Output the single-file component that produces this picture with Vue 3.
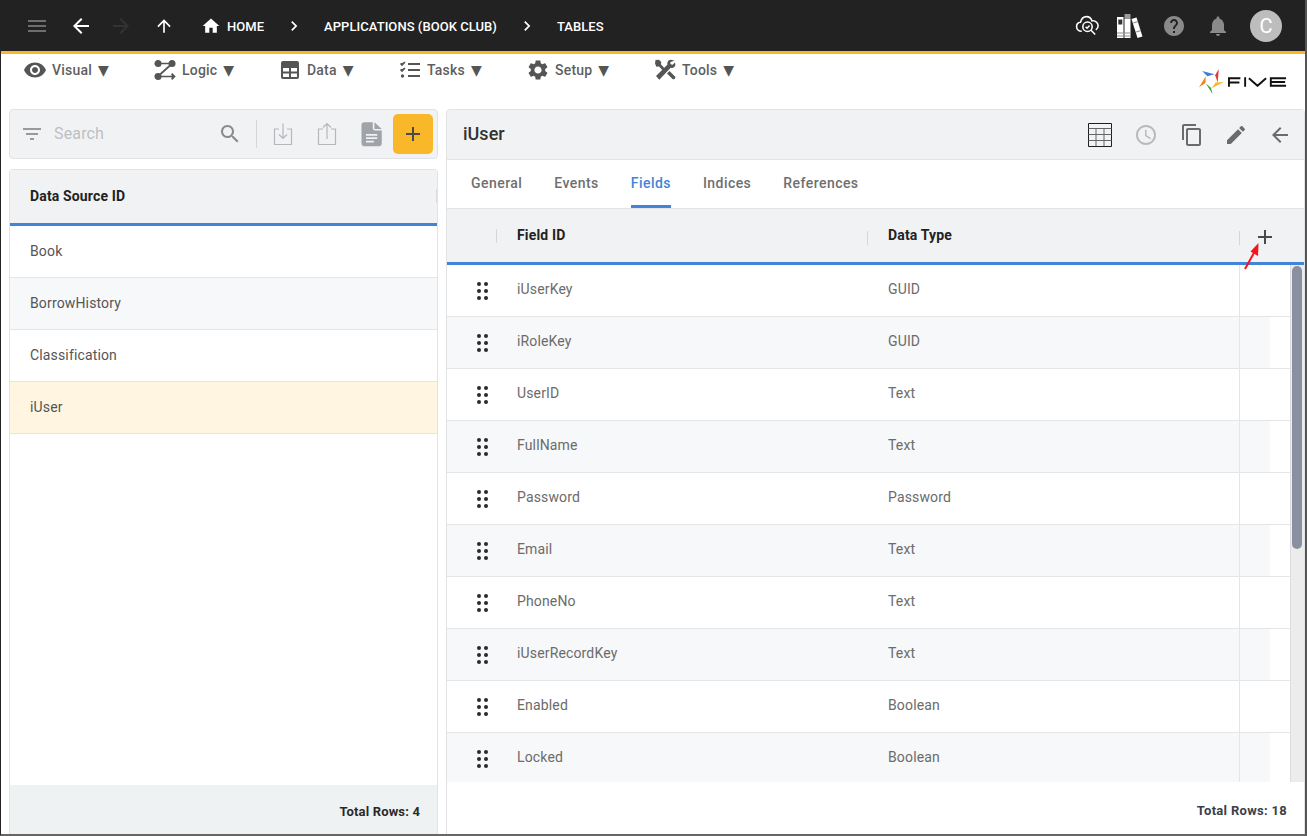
<template>
  <div class="app">
    <header class="topbar">
      <svg class="ic menu-ic" viewBox="0 0 24 24"><path :d="icons.menu" /></svg>
      <svg class="ic back-ic" viewBox="0 0 24 24"><path :d="icons.back" /></svg>
      <svg class="ic fwd-ic" viewBox="0 0 24 24"><path :d="icons.forward" /></svg>
      <svg class="ic up-ic" viewBox="0 0 24 24"><path :d="icons.up" /></svg>
      <svg class="ic home-ic" viewBox="0 0 24 24"><path :d="icons.home" /></svg>
      <span class="crumb home-crumb">HOME</span>
      <svg class="ic chev" viewBox="0 0 24 24"><path :d="icons.chevron" /></svg>
      <span class="crumb">APPLICATIONS (BOOK CLUB)</span>
      <svg class="ic chev" viewBox="0 0 24 24"><path :d="icons.chevron" /></svg>
      <span class="crumb">TABLES</span>
      <div class="top-right">
        <svg class="cloud" viewBox="0 0 24 24" fill="none" stroke="#fff" stroke-width="1.5">
          <path d="M6.5 17.5C3.5 17.5 1.5 15.5 1.5 13c0-2.3 1.7-4 3.8-4.2C6 6 8.2 3.5 11 3.5c2.6 0 4.6 1.7 5.2 4 .4-.1.7-.1 1-.1 2.8 0 5 2.2 5 4.9 0 1.7-.9 3.1-2.2 4" />
          <circle cx="12" cy="13.2" r="4.5" />
          <path d="M10.2 13.2l1.4 1.4 2.4-2.6M15.4 16.6l4 4" />
        </svg>
        <svg class="books" viewBox="0 0 26 26">
          <path fill="#fff" d="M0 4h6.5v21H0z" />
          <path fill="#fff" d="M7.5 5.5H13.500V25H7.500z" />
          <path fill="#9a9a9a" d="M7.500 1H13.500v4.500H7.500z" />
          <path fill="#fff" d="M14.500 6l5-1.500 6 19-5 1.500z" />
          <path fill="#333" d="M1.300 6.500h4v5h-4z" />
          <path fill="#8a8a8a" d="M0 19.500h6.500v1H0zM7.500 19.500h6v1h-6zM0 22.500h6.500v1H0zM7.500 22.500h6v1h-6z" />
          <path fill="#8a8a8a" d="M19 18.500l4.800-1.500.3 1-4.800 1.500zM16.300 9.500l4.800-1.500.3 1-4.800 1.500z" />
        </svg>
        <svg class="ic help" viewBox="0 0 24 24"><path :d="icons.help" /></svg>
        <svg class="ic bell" viewBox="0 0 24 24"><path :d="icons.bell" /></svg>
        <div class="avatar">C</div>
      </div>
    </header>

    <nav class="menubar">
      <div v-for="m in menus" :key="m.label" class="menu-item" :style="{ width: m.width + 'px' }">
        <svg v-if="m.icon === 'logic'" class="ic mi" viewBox="0 0 24 24" fill="none" stroke="#555" stroke-width="1.7">
          <circle cx="5" cy="5.500" r="2.700" />
          <circle cx="19" cy="5.500" r="2.700" />
          <circle cx="5" cy="18.500" r="2.700" />
          <path d="M7.700 5.500h8.600M17 7.500 7 16.500M7.700 18.500H21.500M18.700 15.700l2.800 2.800-2.800 2.800" />
        </svg>
        <svg v-else-if="m.icon === 'data'" class="ic mi" viewBox="0 0 24 24">
          <path fill="#555" fill-rule="evenodd" d="M5 3h14a2 2 0 0 1 2 2v14a2 2 0 0 1-2 2H5a2 2 0 0 1-2-2V5a2 2 0 0 1 2-2zm0 7v3.500h6V10zm8 0v3.500h6V10zm-8 5.500V19h6v-3.500zm8 0V19h6v-3.500z" />
        </svg>
        <svg v-else-if="m.icon === 'tasks'" class="ic mi" viewBox="0 0 24 24" fill="none" stroke="#555">
          <path stroke-width="2" d="M10 6h12M10 12h12M10 18h12" />
          <path stroke-width="1.600" d="M2.500 5.500l1.500 1.500 3-3M2.500 11.500l1.500 1.500 3-3" />
          <circle cx="4.500" cy="18" r="1.700" fill="#555" stroke="none" />
        </svg>
        <svg v-else-if="m.icon === 'tools'" class="ic mi" viewBox="0 0 24 24">
          <path fill="#555" d="M2.500 2 6 1.800l2.200 2.200-.2 2.600 4.800 4.800-2 2-4.800-4.800-2.600.2L2 5.500z" />
          <path fill="#555" d="M21.500 2.500 17.800 1.700c-1.900 0-3.500 1.600-3.500 3.500 0 .5.100.9.200 1.300L3 18l3.300 3.700L17.700 9.800c.4.200.8.200 1.200.2 1.900 0 3.500-1.600 3.500-3.500l-.4-2-2.300 2.300-2-.5-.5-2z" />
          <path fill="#555" d="m14 15.500 2.500-2.500 5.500 5.500a1.800 1.800 0 0 1-2.500 2.500z" />
        </svg>
        <svg v-else class="ic mi" viewBox="0 0 24 24"><path fill="#555" :d="icons[m.icon]" /></svg>
        <span>{{ m.label }}</span>
        <span class="caret">▼</span>
      </div>
      <div class="logo">
        <svg class="logo-mark" viewBox="0 0 24 24">
          <path fill="#3f7fd9" d="M3 2 15 5 8 7z" />
          <path fill="#e53935" d="M19 0 18 13 15.500 6z" />
          <path fill="#f9b72a" d="M24 12.500 12 18.500l4-5.500z" />
          <path fill="#43a047" d="M13 24 6.500 14l5 4z" />
          <path fill="#f58220" d="M0 17.500 6.500 7l-.3 6.500z" />
        </svg>
        <span class="logo-word">
          <svg viewBox="0 0 62 10" fill="none" stroke="#111" stroke-width="2">
            <path d="M1 10V1h12M1 5.500h11M18 0v10M22 1l9 8 9-8M61 1H45v8h16M45 5h15" />
          </svg>
        </span>
      </div>
    </nav>

    <main class="content">
      <section class="left">
        <div class="toolbar">
          <svg class="ic filter" viewBox="0 0 24 24"><path :d="icons.filter" /></svg>
          <span class="search-text">Search</span>
          <svg class="ic search" viewBox="0 0 24 24"><path :d="icons.search" /></svg>
          <span class="tool-sep"></span>
          <svg class="tr-ic" viewBox="0 0 24 24" fill="none" stroke="#b4b7bb" stroke-width="1.200">
            <path d="M8 7H3.500v15.500h17V7H16M12 1.500V16M8 12.500l4 4 4-4" />
          </svg>
          <svg class="tr-ic export" viewBox="0 0 24 24" fill="none" stroke="#b4b7bb" stroke-width="1.200">
            <path d="M8 7H3.500v15.500h17V7H16M12 17V1.500M8 5.500l4-4 4 4" />
          </svg>
          <svg class="doc" viewBox="0 0 24 24">
            <path fill="#a0a3a8" d="M4 3.500A2.500 2.500 0 0 1 6.500 1H14v5.500a2 2 0 0 0 2 2h6v11a3 3 0 0 1-3 3H7a3 3 0 0 1-3-3z" />
            <path fill="#a0a3a8" d="M15.500 1 22 7h-6.500z" />
            <path fill="#f1f2f4" d="M8 11.500h10v1.600H8zM8 14.500h10v1.600H8zM8 17.500h7v1.600H8z" />
          </svg>
          <button class="add-btn">
            <svg class="ic" viewBox="0 0 24 24"><path :d="icons.add" /></svg>
          </button>
        </div>
        <div class="list-card">
          <div class="list-head">Data Source ID<span class="head-tick"></span></div>
          <div class="list-body">
            <div
              v-for="(s, i) in sources"
              :key="s"
              class="list-row"
              :class="{ alt: i % 2 === 1, selected: s === 'iUser' }"
            >{{ s }}</div>
          </div>
          <div class="list-foot">Total Rows: 4</div>
        </div>
      </section>

      <section class="right">
        <div class="title-bar">
          <span class="title">iUser</span>
          <div class="title-icons">
            <svg class="grid-ic" viewBox="0 0 24 24" fill="none">
              <path stroke="#1f1f1f" stroke-width="1" d="M.5.500h23v23H.5z" />
              <path stroke="#666" stroke-width="1" d="M.5 5.500h23M.5 11.500h23M.5 17.500h23M8 5v18M16 5v18" />
            </svg>
            <svg class="ic clock" viewBox="0 0 24 24"><path :d="icons.clock" /></svg>
            <svg class="ic t-ic" viewBox="0 0 24 24"><path :d="icons.copy" /></svg>
            <svg class="ic t-ic" viewBox="0 0 24 24"><path :d="icons.edit" /></svg>
            <svg class="ic t-ic" viewBox="0 0 24 24"><path :d="icons.back" /></svg>
          </div>
        </div>
        <div class="tabs">
          <span v-for="t in tabs" :key="t" class="tab" :class="{ active: t === 'Fields' }">{{ t }}</span>
        </div>
        <div class="fields-head">
          <div class="c-drag"><span class="tick"></span></div>
          <div class="c-id">Field ID<span class="tick end"></span></div>
          <div class="c-type">Data Type<span class="tick end"></span></div>
          <div class="c-add">
            <svg class="ic plus" viewBox="0 0 24 24"><path :d="icons.add" /></svg>
            <svg class="red-arrow" viewBox="0 0 20 32">
              <path d="M3 30 13 12" stroke="#f5141e" stroke-width="2" fill="none" />
              <path d="M16.500 4 16 17 8.500 12.500z" fill="#f5141e" />
            </svg>
          </div>
        </div>
        <div class="fields-wrap">
          <div class="fields-body">
            <div v-for="(f, i) in fields" :key="f.id" class="f-row" :class="{ alt: i % 2 === 1 }">
              <div class="c-drag">
                <svg class="dots" viewBox="0 0 11 18">
                  <circle v-for="d in dots" :key="d[0] + '-' + d[1]" :cx="d[0]" :cy="d[1]" r="2" />
                </svg>
              </div>
              <div class="c-id">{{ f.id }}</div>
              <div class="c-type">{{ f.type }}</div>
              <div class="c-add"></div>
            </div>
          </div>
          <div class="scroll"><div class="thumb"></div></div>
        </div>
        <div class="fields-foot">Total Rows: 18</div>
      </section>
    </main>
  </div>
</template>

<script setup>
const icons = {
  menu: 'M3 18h18v-2H3v2zm0-5h18v-2H3v2zm0-7v2h18V6H3z',
  back: 'M20 11H7.830l5.590-5.590L12 4l-8 8 8 8 1.410-1.410L7.830 13H20v-2z',
  forward: 'M12 4l-1.410 1.410L16.170 11H4v2h12.170l-5.580 5.590L12 20l8-8z',
  up: 'M4 12l1.410 1.410L11 7.830V20h2V7.830l5.580 5.590L20 12l-8-8-8 8z',
  home: 'M10 20v-6h4v6h5v-8h3L12 3 2 12h3v8z',
  chevron: 'M10 6L8.590 7.410 13.170 12l-4.580 4.590L10 18l6-6z',
  help: 'M12 2C6.480 2 2 6.480 2 12s4.480 10 10 10 10-4.480 10-10S17.520 2 12 2zm1 17h-2v-2h2v2zm2.070-7.750l-.9.920C13.450 12.900 13 13.500 13 15h-2v-.5c0-1.100.450-2.100 1.170-2.830l1.240-1.260c.370-.360.590-.860.590-1.410 0-1.100-.9-2-2-2s-2 .9-2 2H8c0-2.210 1.790-4 4-4s4 1.790 4 4c0 .880-.360 1.680-.930 2.250z',
  bell: 'M12 22c1.100 0 2-.9 2-2h-4c0 1.100.890 2 2 2zm6-6v-5c0-3.070-1.640-5.640-4.500-6.320V4c0-.830-.670-1.500-1.500-1.500s-1.500.670-1.500 1.500v.680C7.630 5.360 6 7.920 6 11v5l-2 2v1h16v-1l-2-2z',
  eye: 'M12 4.500C7 4.500 2.730 7.610 1 12c1.730 4.390 6 7.500 11 7.500s9.270-3.110 11-7.500c-1.730-4.390-6-7.500-11-7.500zM12 17c-2.760 0-5-2.240-5-5s2.240-5 5-5 5 2.240 5 5-2.240 5-5 5zm0-8c-1.660 0-3 1.340-3 3s1.340 3 3 3 3-1.340 3-3-1.340-3-3-3z',
  gear: 'M19.140 12.940c.040-.3.060-.610.060-.940 0-.320-.020-.640-.070-.940l2.030-1.580c.180-.140.230-.410.120-.610l-1.920-3.320c-.120-.220-.370-.290-.590-.220l-2.390.960c-.5-.380-1.030-.7-1.620-.940l-.360-2.540c-.040-.240-.240-.410-.480-.410h-3.840c-.240 0-.430.170-.470.410l-.360 2.540c-.590.240-1.130.570-1.620.940l-2.390-.960c-.220-.080-.470 0-.590.220L2.740 8.870c-.120.210-.080.470.120.610l2.030 1.580c-.050.3-.090.630-.090.940s.020.640.070.940l-2.030 1.580c-.180.140-.230.410-.120.610l1.920 3.320c.120.220.370.290.590.220l2.390-.960c.5.380 1.030.7 1.620.940l.360 2.540c.050.240.240.410.480.410h3.840c.240 0 .440-.170.470-.410l.360-2.540c.590-.240 1.130-.560 1.620-.940l2.390.960c.220.080.470 0 .590-.220l1.920-3.320c.120-.220.070-.470-.120-.610l-2.010-1.580zM12 15.600c-1.980 0-3.600-1.620-3.600-3.600s1.620-3.600 3.600-3.600 3.600 1.620 3.600 3.600-1.620 3.600-3.600 3.600z',
  search: 'M15.500 14h-.790l-.280-.270C15.410 12.590 16 11.110 16 9.500 16 5.910 13.090 3 9.500 3S3 5.910 3 9.500 5.910 16 9.500 16c1.610 0 3.090-.590 4.230-1.570l.270.280v.790l5 4.990L20.490 19l-4.990-5zm-6 0C7.010 14 5 11.990 5 9.500S7.010 5 9.500 5 14 7.010 14 9.500 11.990 14 9.500 14z',
  filter: 'M10 18h4v-2h-4v2zM3 6v2h18V6H3zm3 7h12v-2H6v2z',
  add: 'M19 13h-6v6h-2v-6H5v-2h6V5h2v6h6v2z',
  copy: 'M16 1H4c-1.100 0-2 .9-2 2v14h2V3h12V1zm3 4H8c-1.100 0-2 .9-2 2v14c0 1.100.9 2 2 2h11c1.100 0 2-.9 2-2V7c0-1.100-.9-2-2-2zm0 16H8V7h11v14z',
  edit: 'M3 17.250V21h3.750L17.810 9.940l-3.750-3.750L3 17.250zM20.710 7.040c.390-.390.390-1.020 0-1.410l-2.340-2.340c-.390-.390-1.020-.390-1.410 0l-1.830 1.830 3.750 3.750 1.830-1.830z',
  clock: 'M11.990 2C6.470 2 2 6.480 2 12s4.470 10 9.990 10C17.520 22 22 17.520 22 12S17.520 2 11.990 2zM12 20c-4.420 0-8-3.580-8-8s3.580-8 8-8 8 3.580 8 8-3.580 8-8 8zm.5-13H11v6l5.250 3.150.750-1.230-4.500-2.670z',
}

const menus = [
  { label: 'Visual', icon: 'eye', width: 130 },
  { label: 'Logic', icon: 'logic', width: 125 },
  { label: 'Data', icon: 'data', width: 120 },
  { label: 'Tasks', icon: 'tasks', width: 128 },
  { label: 'Setup', icon: 'gear', width: 127 },
  { label: 'Tools', icon: 'tools', width: 110 },
]

const sources = ['Book', 'BorrowHistory', 'Classification', 'iUser']
const tabs = ['General', 'Events', 'Fields', 'Indices', 'References']

const fields = [
  { id: 'iUserKey', type: 'GUID' },
  { id: 'iRoleKey', type: 'GUID' },
  { id: 'UserID', type: 'Text' },
  { id: 'FullName', type: 'Text' },
  { id: 'Password', type: 'Password' },
  { id: 'Email', type: 'Text' },
  { id: 'PhoneNo', type: 'Text' },
  { id: 'iUserRecordKey', type: 'Text' },
  { id: 'Enabled', type: 'Boolean' },
  { id: 'Locked', type: 'Boolean' },
]

const dots = [[2, 2], [9, 2], [2, 9], [9, 9], [2, 16], [9, 16]]
</script>

<style>
html, body { margin: 0; background: #fff; }
</style>

<style scoped>
.app {
  width: 1307px;
  height: 836px;
  overflow: hidden;
  display: flex;
  flex-direction: column;
  box-sizing: border-box;
  border-left: 1px solid #222;
  border-right: 2px solid #555;
  border-bottom: 2px solid #666;
  font-family: Roboto, "Liberation Sans", sans-serif;
  color: #555;
  background: #fff;
  letter-spacing: 0.15px;
}
.ic { width: 24px; height: 24px; flex: none; display: block; fill: #555; }

.topbar {
  height: 54px;
  flex: none;
  box-sizing: border-box;
  background: #222;
  border-bottom: 3px solid #f9b72a;
  display: flex;
  align-items: center;
  color: #fff;
}
.menu-ic { margin-left: 24px; fill: #6e6e6e; }
.back-ic { margin-left: 20px; fill: #fff; }
.fwd-ic { margin-left: 16px; fill: #333; }
.up-ic { margin-left: 21px; margin-right: 2px; width: 20px; height: 20px; fill: #fff; }
.home-ic { margin-left: 25px; width: 20px; height: 20px; fill: #fff; }
.crumb { font-size: 13px; font-weight: 500; color: #fff; white-space: nowrap; padding-top: 2px; letter-spacing: 0.05px; }
.home-crumb { margin-left: 6px; }
.chev { fill: #fff; width: 20px; height: 20px; margin: 0 20px 0 20px; }
.top-right { margin-left: auto; display: flex; align-items: center; margin-right: 23px; }
.cloud { width: 25px; height: 25px; margin-right: 17px; }
.books { width: 26px; height: 26px; margin-right: 19px; }
.help { fill: #8a8a8a; margin-right: 20px; }
.bell { fill: #8a8a8a; margin-right: 20px; }
.avatar {
  width: 32px;
  height: 32px;
  border-radius: 50%;
  background: #bdbdbd;
  color: #fff;
  font-size: 20px;
  display: flex;
  align-items: center;
  justify-content: center;
}

.menubar {
  height: 55px;
  flex: none;
  display: flex;
  align-items: flex-start;
  padding-left: 22px;
  position: relative;
}
.menu-item {
  display: flex;
  align-items: center;
  gap: 5px;
  height: 24px;
  margin-top: 4px;
  flex: none;
  font-size: 14px;
  font-weight: 500;
  color: #5f5f5f;
  letter-spacing: 0.2px;
}
.caret { font-size: 14px; color: #555; margin-left: 1px; font-family: "DejaVu Sans", sans-serif; line-height: 1; }
.mi { width: 24px; height: 24px; }
.logo {
  margin-left: auto;
  margin-right: 18px;
  margin-top: 15px;
  display: flex;
  align-items: center;
  gap: 4px;
}
.logo-mark { width: 25px; height: 25px; }
.logo-word { display: block; width: 59px; height: 10px; }
.logo-word svg { display: block; width: 59px; height: 10px; }

.content {
  flex: 1;
  min-height: 0;
  display: flex;
  gap: 8px;
  padding-left: 8px;
}

.left { width: 429px; flex: none; display: flex; flex-direction: column; gap: 10px; }
.toolbar {
  height: 50px;
  flex: none;
  box-sizing: border-box;
  border: 1px solid #e2e3e5;
  border-radius: 4px;
  background: #f1f2f4;
  display: flex;
  align-items: center;
  padding: 0 4px 0 10px;
}
.filter { fill: #9a9a9a; }
.search-text { margin-left: 10px; font-size: 16px; color: #bdbfc2; padding-bottom: 2px; }
.search { fill: #8a8a8a; margin-left: auto; }
.tool-sep { width: 1px; height: 28px; background: #d6d7d9; margin: 0 14px 0 14px; }
.tr-ic { width: 24px; height: 30px; flex: none; }
.export { margin-left: 20px; }
.doc { display: block; flex: none; width: 27px; height: 27px; margin-left: 18px; margin-right: 1px; }
.add-btn {
  width: 40px;
  height: 40px;
  border: 0;
  border-radius: 5px;
  background: #f9b72a;
  padding: 0;
  margin-left: 8px;
  display: flex;
  align-items: center;
  justify-content: center;
}
.add-btn .ic { fill: #4a4a4a; }

.list-card {
  flex: 1;
  min-height: 0;
  display: flex;
  flex-direction: column;
  box-sizing: border-box;
  border: 1px solid #e2e3e5;
  border-bottom: 0;
  border-radius: 4px 4px 0 0;
}
.list-head {
  height: 56px;
  flex: none;
  box-sizing: border-box;
  background: #f1f2f4;
  border-bottom: 3px solid #4285d8;
  display: flex;
  align-items: center;
  padding: 0 0 2px 20px;
  font-size: 14px;
  font-weight: 700;
  color: #222;
  position: relative;
}
.head-tick { position: absolute; right: 0; top: 19px; width: 1px; height: 14px; background: #dcdcde; }
.list-body { flex: 1; min-height: 0; }
.list-row {
  height: 52px;
  box-sizing: border-box;
  border-bottom: 1px solid #e4e5e7;
  display: flex;
  align-items: center;
  padding: 0 0 2px 20px;
  font-size: 14px;
  color: #555;
}
.list-row.alt { background: #f7f8fa; }
.list-row.selected { background: #fff5e0; }
.list-foot {
  height: 49px;
  flex: none;
  box-sizing: border-box;
  background: #eff2f3;
  display: flex;
  align-items: center;
  justify-content: flex-end;
  padding: 4px 17px 0 0;
  font-size: 13px;
  font-weight: 700;
  color: #2a2a2a;
}

.right {
  flex: 1;
  min-width: 0;
  display: flex;
  flex-direction: column;
  box-sizing: border-box;
  border: 1px solid #e2e3e5;
  border-bottom: 0;
  border-radius: 4px 4px 0 0;
}
.title-bar {
  height: 50px;
  flex: none;
  box-sizing: border-box;
  background: #f1f2f4;
  border-bottom: 1px solid #e2e3e5;
  display: flex;
  align-items: center;
  justify-content: space-between;
  padding: 0 12px 0 16px;
}
.title { font-size: 18px; font-weight: 500; color: #333; padding-bottom: 2px; letter-spacing: 0; }
.title-icons { display: flex; align-items: center; gap: 22px; }
.title-icons .t-ic:nth-child(n + 4) { margin-left: -2px; }
.grid-ic { width: 24px; height: 24px; display: block; }
.clock { fill: #b8b9bb; }
.t-ic { fill: #6b6b6b; }
.tabs {
  height: 49px;
  flex: none;
  box-sizing: border-box;
  border-bottom: 1px solid #e2e3e5;
  display: flex;
  padding-left: 24px;
  gap: 32px;
}
.tab {
  height: 48px;
  box-sizing: border-box;
  display: flex;
  align-items: center;
  padding-bottom: 2px;
  font-size: 14px;
  font-weight: 500;
  color: #6f6f6f;
  letter-spacing: 0.45px;
}
.tab.active { color: #4285d8; border-bottom: 3px solid #4285d8; padding-bottom: 0; }

.fields-head {
  height: 56px;
  flex: none;
  box-sizing: border-box;
  background: #f1f2f4;
  border-bottom: 3px solid #4285d8;
  display: flex;
  align-items: center;
  font-size: 14px;
  font-weight: 700;
  color: #222;
}
.fields-head .c-id, .fields-head .c-type { padding-bottom: 2px; }
.c-drag { width: 50px; flex: none; position: relative; display: flex; justify-content: center; box-sizing: border-box; }
.c-id { width: 371px; flex: none; padding-left: 20px; box-sizing: border-box; position: relative; }
.c-type { width: 371px; flex: none; padding-left: 20px; box-sizing: border-box; position: relative; }
.c-add { flex: 1; position: relative; align-self: stretch; }
.tick { position: absolute; left: 49px; top: -7px; width: 1px; height: 14px; background: #d6d7d9; }
.tick.end { left: auto; right: 0; top: 4px; }
.fields-head .c-type .tick.end { right: -1px; }
.plus { position: absolute; left: 14px; top: 16px; fill: #4a4a4a; }
.red-arrow { position: absolute; left: 3px; top: 30px; width: 20px; height: 32px; z-index: 2; }

.fields-wrap { flex: 1; min-height: 0; display: flex; overflow: hidden; }
.fields-body { flex: 1; min-width: 0; overflow: hidden; background: #fff; }
.f-row {
  height: 52px;
  box-sizing: border-box;
  border-bottom: 1px solid #e4e5e7;
  display: flex;
  align-items: center;
  font-size: 14px;
  color: #6b6b6b;
  background: #fff;
}
.f-row .c-id, .f-row .c-type { padding-bottom: 4px; }
.f-row.alt { background: linear-gradient(to right, #f7f8fa 823px, #fff 823px); }
.f-row .c-add { border-left: 1px solid #e4e5e7; }
.dots { width: 11px; height: 18px; fill: #2a2a2a; display: block; margin-left: 20px; }
.scroll { width: 14px; flex: none; background: #ececec; border-left: 1px solid #dcdcdc; box-sizing: border-box; padding: 1px 2px 0 1px; }
.thumb { height: 283px; background: #8a90a0; border-radius: 5px; }
.fields-foot {
  height: 52px;
  flex: none;
  box-sizing: border-box;
  display: flex;
  align-items: center;
  justify-content: flex-end;
  padding: 4px 17px 0 0;
  font-size: 13px;
  font-weight: 700;
  letter-spacing: 0.3px;
  color: #3a3f4a;
}
</style>
